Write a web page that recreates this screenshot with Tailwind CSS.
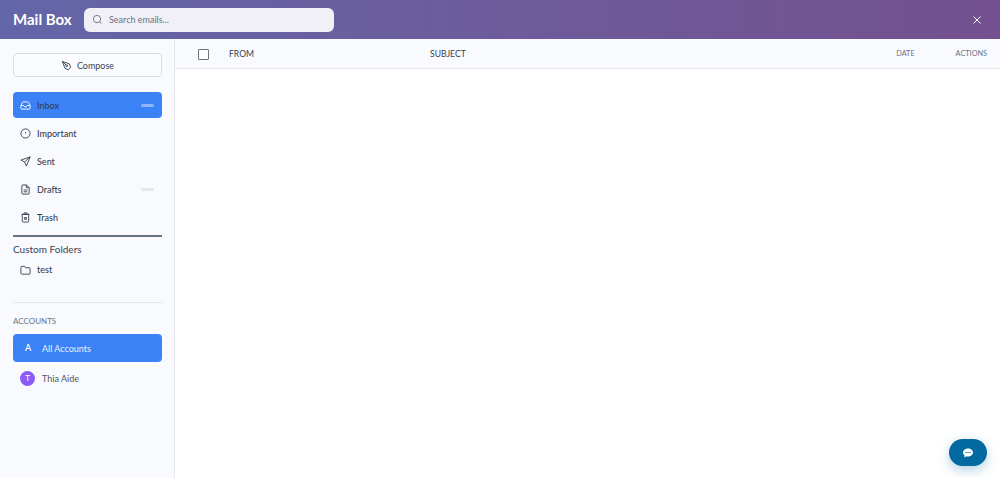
<!DOCTYPE html>
<html lang="en">
<head>
    <meta charset="UTF-8">
    <meta name="viewport" content="width=device-width, initial-scale=1.0">
    <title>Mail Box</title>
    <script src="https://cdn.jsdelivr.net/npm/@tailwindcss/browser@4"></script>
</head>
<body class="h-[478px] overflow-hidden bg-white font-['Lato',sans-serif] text-[#374151]">
    <header class="h-[39px] flex items-center pl-[13px] pr-4 bg-gradient-to-r from-[#6366a8] to-[#74508f]">
        <h1 class="w-[71px] text-[15px] leading-none font-bold text-white">Mail Box</h1>
        <div class="w-[250px] h-6 flex items-center gap-[6px] px-2 rounded-md bg-[#f1f0f6]">
            <svg class="w-[11px] h-[11px] text-[#6b7280]" viewBox="0 0 24 24" fill="none" stroke="currentColor" stroke-width="2"><circle cx="11" cy="11" r="8"/><path d="m21 21-4.3-4.3"/></svg>
            <span class="text-[9px] text-[#6b7280]">Search emails...</span>
        </div>
        <svg class="w-3 h-3 ml-auto mr-px text-white" viewBox="0 0 24 24" fill="none" stroke="currentColor" stroke-width="2"><path d="M5 5l14 14M19 5 5 19"/></svg>
    </header>
    <div class="flex h-[439px]">
        <aside class="w-[175px] shrink-0 border-r border-[#e5e7eb] bg-[#f9fafe] pl-[13px] pr-3 pt-[14px]">
            <button class="w-full h-6 flex items-center justify-center gap-[5px] rounded border border-[#d8dbe2] bg-[#fbfcfe] text-[9px] text-[#374151]">
                <svg class="w-[11px] h-[11px]" viewBox="0 0 24 24" fill="none" stroke="currentColor" stroke-width="2"><path d="M15.7 21.3 21.3 15.7 18 8.5 3 3l5.500 15z"/><path d="m3 3 8 8"/><circle cx="12.5" cy="12.5" r="2"/></svg>
                <span class="pt-px">Compose</span>
            </button>
            <nav class="mt-[15px] flex flex-col gap-[2px]">
                <a class="h-[26px] flex items-center pl-[7px] pr-2 rounded bg-[#3b82f6] text-[9px] font-medium text-[#374151]">
                    <svg class="w-[11px] h-[11px] text-white" viewBox="0 0 24 24" fill="none" stroke="currentColor" stroke-width="2"><path d="M22 12h-6l-2 3h-4l-2-3H2"/><path d="M5.5 5.1 2 12v6a2 2 0 0 0 2 2h16a2 2 0 0 0 2-2v-6l-3.5-6.9A2 2 0 0 0 16.8 4H7.2a2 2 0 0 0-1.7 1.1z"/></svg>
                    <span class="ml-[6px] pt-px">Inbox</span>
                    <span class="ml-auto w-[13px] h-[3px] rounded-full bg-[#8fb6f8]"></span>
                </a>
                <a class="h-[26px] flex items-center pl-[7px] pr-2 text-[9px] font-medium">
                    <svg class="w-[11px] h-[11px]" viewBox="0 0 24 24" fill="none" stroke="currentColor" stroke-width="2"><circle cx="12" cy="12" r="10"/><path d="M12 9v3"/></svg>
                    <span class="ml-[6px] pt-px">Important</span>
                </a>
                <a class="h-[26px] flex items-center pl-[7px] pr-2 text-[9px] font-medium">
                    <svg class="w-[11px] h-[11px]" viewBox="0 0 24 24" fill="none" stroke="currentColor" stroke-width="2"><path d="M22 2 2 9l8 4 4 9z"/><path d="M22 2 10 13"/></svg>
                    <span class="ml-[6px] pt-px">Sent</span>
                </a>
                <a class="h-[26px] flex items-center pl-[7px] pr-2 text-[9px] font-medium">
                    <svg class="w-[11px] h-[11px]" viewBox="0 0 24 24" fill="none" stroke="currentColor" stroke-width="2"><path d="M14 2H6a2 2 0 0 0-2 2v16a2 2 0 0 0 2 2h12a2 2 0 0 0 2-2V8z"/><path d="M14 2v6h6M8 13h8M8 17h8"/></svg>
                    <span class="ml-[6px] pt-px">Drafts</span>
                    <span class="ml-auto w-[13px] h-[3px] rounded-full bg-[#e2e6ed]"></span>
                </a>
                <a class="h-[26px] flex items-center pl-[7px] pr-2 text-[9px] font-medium">
                    <svg class="w-[11px] h-[11px]" viewBox="0 0 24 24" fill="none" stroke="currentColor" stroke-width="2"><rect x="5" y="5" width="14" height="17" rx="2"/><path d="M3 5h18M9 5V2h6v3M10 12h4v4h-4z"/></svg>
                    <span class="ml-[6px] pt-px">Trash</span>
                </a>
            </nav>
            <div class="mt-[5px] border-t-2 border-[#6b7280]"></div>
            <h2 class="mt-[5px] text-[10px] leading-[15px] text-[#374151]">Custom Folders</h2>
            <a class="mt-px h-[24px] flex items-center pl-[7px] text-[9px] font-medium">
                <svg class="w-[11px] h-[11px]" viewBox="0 0 24 24" fill="none" stroke="currentColor" stroke-width="2"><path d="M20 20a2 2 0 0 0 2-2V8a2 2 0 0 0-2-2h-8l-2-3H4a2 2 0 0 0-2 2v13a2 2 0 0 0 2 2z"/></svg>
                <span class="ml-[6px]">test</span>
            </a>
            <div class="mt-[20px] border-t border-[#e5e7eb]"></div>
            <h3 class="mt-[13px] text-[8px] leading-[11px] text-[#6b7280]">ACCOUNTS</h3>
            <a class="mt-[7px] h-7 flex items-center rounded bg-[#3b82f6] pl-3 text-[9px] text-[#e8f0fe]">
                <span class="w-[6px] font-semibold text-white">A</span>
                <span class="ml-[11px] pt-px">All Accounts</span>
            </a>
            <a class="mt-[2px] h-7 flex items-center pl-[7px] text-[9px] text-[#4b5563]">
                <span class="w-[15px] h-[15px] flex items-center justify-center rounded-full bg-[#8b5cf6] text-[8px] text-white">T</span>
                <span class="ml-[7px] pt-px">Thia Aide</span>
            </a>
        </aside>
        <main class="flex-1">
            <div class="h-[30px] pt-px flex items-center border-b border-[#e5e7eb] bg-[#f9fafe] text-[8.6px] text-[#374151]">
                <span class="ml-[23px] w-[11px] h-[11px] rounded-[1px] border border-[#6b7280] bg-white"></span>
                <span class="ml-[20px] w-[201px]">FROM</span>
                <span>SUBJECT</span>
                <span class="ml-auto text-[7.3px] text-[#6b7280]">DATE</span>
                <span class="ml-[41px] mr-[13px] text-[7.3px] text-[#6b7280]">ACTIONS</span>
            </div>
        </main>
    </div>
    <button class="fixed right-[13px] bottom-3 w-[38px] h-[27px] flex items-center justify-center rounded-full bg-[#0369a1] text-white shadow-[0_4px_12px_rgba(3,105,161,0.3)]">
        <svg class="w-3 h-3" viewBox="0 0 24 24" fill="currentColor"><path d="M12 3C6.5 3 2 6.6 2 11c0 2.2 1.1 4.2 3 5.6V21l4.2-2.4c.9.2 1.8.4 2.8.4 5.5 0 10-3.6 10-8s-4.500-8-10-8z"/><g fill="#0369a1"><circle cx="8" cy="11" r="1.300"/><circle cx="12" cy="11" r="1.300"/><circle cx="16" cy="11" r="1.300"/></g></svg>
    </button>
</body>
</html>
